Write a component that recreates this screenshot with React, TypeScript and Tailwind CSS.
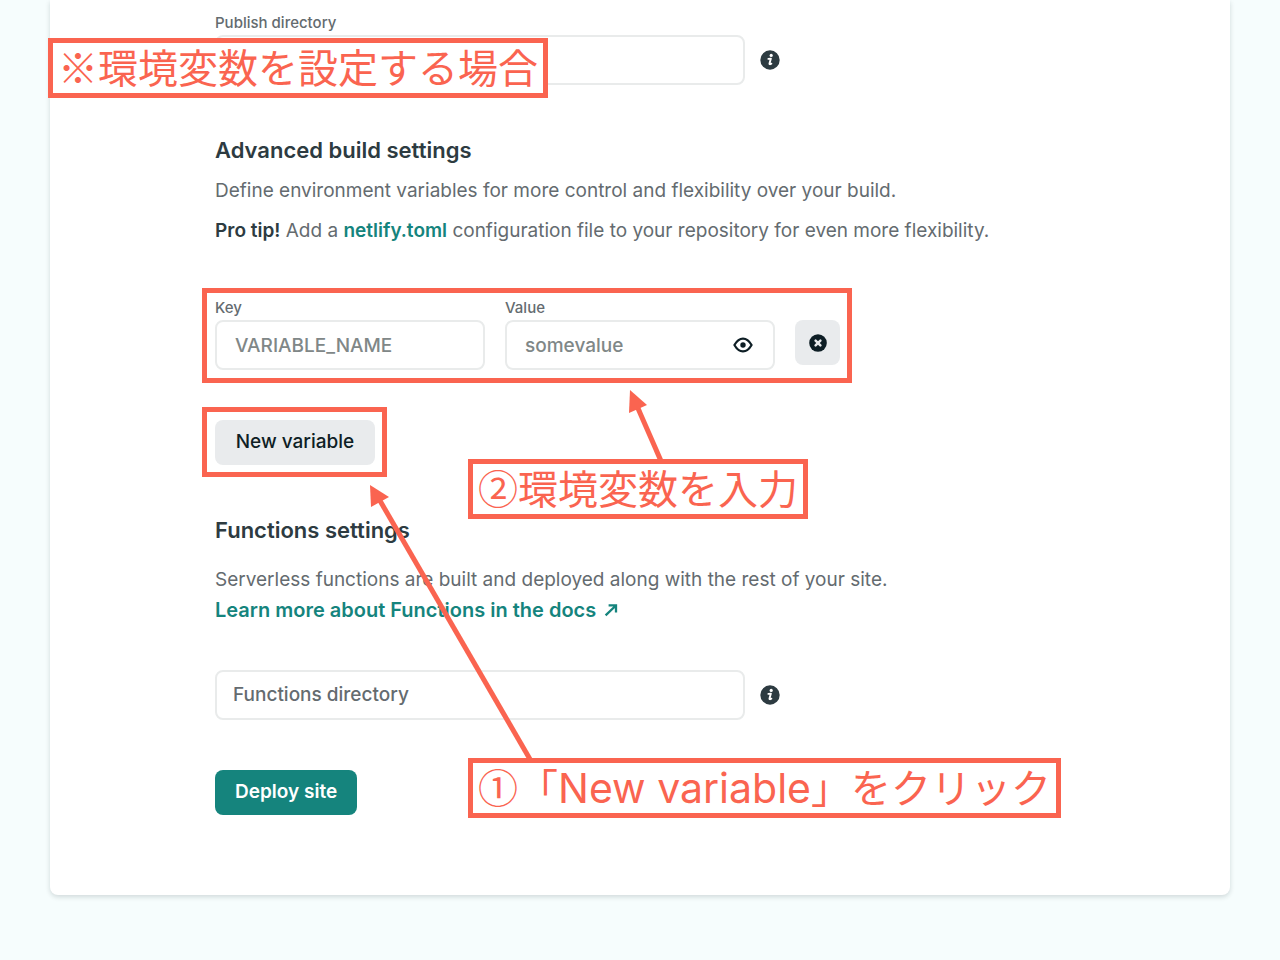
import React, { useState } from 'react';
import clsx from 'clsx';

const INPUT = 'block w-full h-[50px] rounded-lg border-2 border-[#e9ebeb] bg-white text-[19px] font-medium text-[#2d3b41] placeholder:text-[#808787] placeholder:opacity-100 outline-none focus:border-[#15847d]';
const LABEL = 'block mb-0.5 text-[15px] leading-5 font-medium text-[#646b6f]';

function InfoIcon() {
    return (
        <svg viewBox="0 0 20 20" className="w-5 h-5" aria-hidden="true">
            <circle cx="10" cy="10" r="9.7" fill="#2d3b41" />
            <circle cx="11.2" cy="5.4" r="1.6" fill="#fff" />
            <path d="M8.4 8.9 L10.9 8.6 L9.5 13.6 Q9.3 14.7 11.4 13.7" fill="none" stroke="#fff" strokeWidth="1.9" strokeLinecap="round" strokeLinejoin="round" />
        </svg>
    );
}

function EyeIcon() {
    return (
        <svg viewBox="0 0 20 16" className="w-5 h-4" aria-hidden="true">
            <path d="M1.4 8 C3.6 4.2 6.5 1.6 10 1.6 S16.4 4.2 18.6 8 C16.4 11.8 13.5 14.4 10 14.4 S3.6 11.8 1.4 8 Z" fill="none" stroke="#0e1e25" strokeWidth="2.2" strokeLinejoin="round" />
            <circle cx="10" cy="8" r="2.7" fill="#0e1e25" />
        </svg>
    );
}

function RemoveIcon() {
    return (
        <svg viewBox="0 0 18 18" className="w-[18px] h-[18px]" aria-hidden="true">
            <circle cx="9" cy="9" r="8.8" fill="#0e1e25" />
            <path d="M6.6 6.6 L11.4 11.4 M11.4 6.6 L6.6 11.4" stroke="#e9ebed" strokeWidth="2.5" strokeLinecap="round" />
        </svg>
    );
}

function ExternalIcon() {
    return (
        <svg viewBox="0 0 14 14" className="w-3.5 h-3.5" aria-hidden="true">
            <path d="M1.6 12.4 L11.4 3 M4.6 2.4 H12 V9.6" fill="none" stroke="#15847d" strokeWidth="2.3" />
        </svg>
    );
}

function Callout({ className, children }: { className: string; children: React.ReactNode }) {
    return (
        <div
            className={clsx(
                "absolute h-[60px] border-5 border-[#fa6450] bg-white px-[5px] text-[40px] leading-[46px] whitespace-nowrap text-[#fa6450] font-['Noto_Sans_CJK_JP',sans-serif]",
                className
            )}
        >
            {children}
        </div>
    );
}

function Highlight({ className, children }: { className: string; children: React.ReactNode }) {
    return (
        <div className="relative w-fit">
            {children}
            <div className={clsx('absolute -left-[13px] -right-3 border-5 border-[#fa6450] pointer-events-none', className)} />
        </div>
    );
}

export default function App() {
    const [publishDir, setPublishDir] = useState('');
    const [functionsDir, setFunctionsDir] = useState('');
    const [variable, setVariable] = useState({ key: '', value: '' });
    const [showValue, setShowValue] = useState(true);

    return (
        <div className="min-h-screen bg-[#f6fdfd] px-[50px] pb-16 font-[Inter,sans-serif]">
            <main className="rounded-b-lg bg-white shadow-[0_2px_5px_rgba(14,30,37,0.16)]">
                <form className="relative mx-auto max-w-[850px] pt-[13px] pb-20" onSubmit={e => e.preventDefault()}>
                    <label htmlFor="publish" className={LABEL}>Publish directory</label>
                    <div className="flex items-center gap-[15px]">
                        <div className="w-[530px]">
                            <input id="publish" className={clsx(INPUT, 'px-4')} value={publishDir} onChange={e => setPublishDir(e.target.value)} />
                        </div>
                        <InfoIcon />
                    </div>

                    {/* Environment variables */}
                    <h2 className="mt-[50px] text-[22px] leading-[30px] font-semibold text-[#2d3b41]">Advanced build settings</h2>
                    <p className="mt-[11px] text-[19px] leading-[30px] text-[#646b6f]">
                        Define environment variables for more control and flexibility over your build.
                    </p>
                    <p className="mt-2.5 text-[19px] leading-[30px] text-[#646b6f]">
                        <strong className="font-semibold text-[#2d3b41]">Pro tip!</strong> Add a{' '}
                        <a href="#toml" className="font-semibold text-[#15847d]">netlify.toml</a> configuration file to your repository for even more flexibility.
                    </p>

                    <div className="mt-[52px]">
                        <Highlight className="-top-2.5 -bottom-[13px]">
                            <div className="flex items-end gap-5">
                                <div className="w-[270px]">
                                    <label htmlFor="var-key" className={LABEL}>Key</label>
                                    <input
                                        id="var-key"
                                        className={clsx(INPUT, 'px-[18px]')}
                                        placeholder="VARIABLE_NAME"
                                        value={variable.key}
                                        onChange={e => setVariable({ ...variable, key: e.target.value })}
                                    />
                                </div>
                                <div className="w-[270px]">
                                    <label htmlFor="var-value" className={LABEL}>Value</label>
                                    <div className="relative">
                                        <input
                                            id="var-value"
                                            type={showValue ? 'text' : 'password'}
                                            className={clsx(INPUT, 'pl-[18px] pr-14')}
                                            placeholder="somevalue"
                                            value={variable.value}
                                            onChange={e => setVariable({ ...variable, value: e.target.value })}
                                        />
                                        <button type="button" aria-label="Toggle value" onClick={() => setShowValue(v => !v)} className="absolute inset-y-0 right-[22px]">
                                            <EyeIcon />
                                        </button>
                                    </div>
                                </div>
                                <button
                                    type="button"
                                    aria-label="Remove variable"
                                    onClick={() => setVariable({ key: '', value: '' })}
                                    className="mb-[5px] flex h-[45px] w-[45px] items-center justify-center rounded-lg bg-[#e9ebed]"
                                >
                                    <RemoveIcon />
                                </button>
                            </div>
                        </Highlight>
                    </div>

                    <div className="mt-[50px]">
                        <Highlight className="-top-[13px] -bottom-3">
                            <button type="button" className="block h-[45px] w-40 rounded-lg bg-[#e9ebed] text-[19px] font-medium text-[#0e1e25]">
                                New variable
                            </button>
                        </Highlight>
                    </div>

                    {/* Functions */}
                    <h2 className="mt-[50px] text-[22px] leading-[30px] font-semibold text-[#2d3b41]">Functions settings</h2>
                    <p className="mt-5 text-[19px] leading-[30px] text-[#646b6f]">
                        Serverless functions are built and deployed along with the rest of your site.
                    </p>
                    <a href="#functions" className="flex w-fit items-center gap-2 text-xl leading-[30px] font-semibold text-[#15847d]">
                        Learn more about Functions in the docs
                        <ExternalIcon />
                    </a>

                    <div className="mt-[45px] flex items-center gap-[15px]">
                        <div className="relative w-[530px]">
                            <input id="functions" className={clsx(INPUT, 'px-4')} value={functionsDir} onChange={e => setFunctionsDir(e.target.value)} />
                            <label
                                htmlFor="functions"
                                className={clsx('absolute inset-y-0 left-[18px] text-[19px] leading-[50px] font-medium text-[#646b6f]', functionsDir && 'hidden')}
                            >
                                Functions directory
                            </label>
                        </div>
                        <InfoIcon />
                    </div>

                    <button type="submit" className="mt-[50px] block h-[45px] rounded-lg bg-[#15847d] px-5 text-[19px] font-semibold text-white">
                        Deploy site
                    </button>

                    {/* Notes and arrows drawn over the form */}
                    <svg viewBox="0 0 170 280" className="absolute left-[150px] top-[482px] w-[170px] h-[280px] pointer-events-none" aria-hidden="true">
                        <path d="M14 17 L166 279" stroke="#fa6450" strokeWidth="5" />
                        <path d="M5 3 L24 15 L6 25 Z" fill="#fa6450" />
                    </svg>
                    <svg viewBox="0 0 50 74" className="absolute left-[410px] top-[388px] w-[50px] h-[74px] pointer-events-none" aria-hidden="true">
                        <path d="M12 18 L36 73" stroke="#fa6450" strokeWidth="5" />
                        <path d="M5 2 L22 17 L4 25 Z" fill="#fa6450" />
                    </svg>
                    <Callout className="-left-[167px] top-[38px]">※環境変数を設定する場合</Callout>
                    <Callout className="left-[253px] top-[459px]">②環境変数を入力</Callout>
                    <Callout className="left-[253px] top-[758px]">
                        ①「<span className="font-[Inter] text-[41px]">New variable</span>」をクリック
                    </Callout>
                </form>
            </main>
        </div>
    );
}
